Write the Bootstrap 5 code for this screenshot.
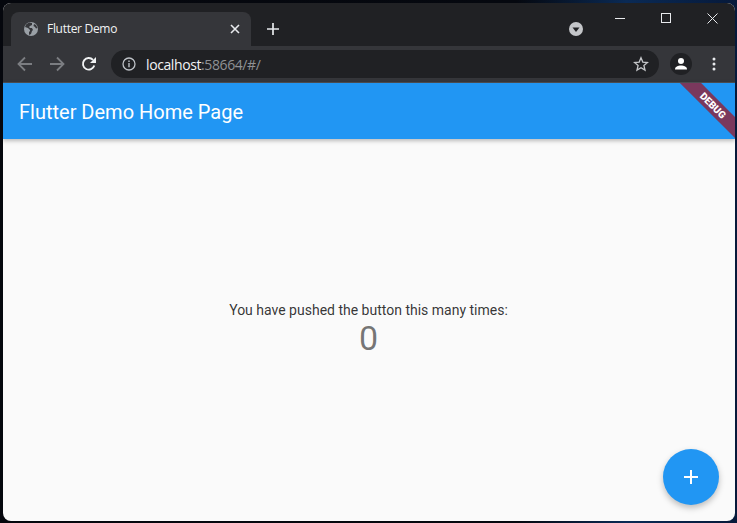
<!DOCTYPE html>
<html lang="en">
<head>
    <meta charset="UTF-8">
    <title>Flutter Demo</title>
    <link href="https://cdn.jsdelivr.net/npm/bootstrap@5.3.0/dist/css/bootstrap.min.css" rel="stylesheet">
    <style>
        html, body { height: 100%; overflow: hidden; }
        body { background: linear-gradient(90deg, #05070d 0%, #05080f 70%, #0a2a55 85%, #06193a 100%); font-family: Roboto, sans-serif; }
        .desk { height: 523px; padding: 3px 2px 2px 3px; }
        .win { height: 518px; border-radius: 8px; overflow: hidden; background: #fafafa; }
        .tabstrip { height: 43px; background: #202124; padding: 9px 0 0 8px; }
        .tabitem { width: 240px; height: 34px; background: #35363a; border-radius: 8px 8px 0 0; padding: 0 11px 0 12px; color: #f1f3f4; font-family: "Open Sans", sans-serif; font-size: 12px; }
        .tabtitle { margin-left: 8px; letter-spacing: -.3px; }
        .newtab { margin-left: 16px; }
        .tabsearch { margin-left: 290px; }
        .winctl { margin-top: -9px; height: 30px; }
        .winbtn { width: 46px; height: 30px; }
        .toolbar { height: 36px; background: #35363a; padding: 0 11px 0 14px; }
        .navbtn { width: 32px; }
        .omni { width: 548px; height: 28px; margin-left: 14px; background: #202124; border-radius: 14px; padding: 0 10px 0 11px; font-family: "Open Sans", sans-serif; font-size: 14px; color: #f1f3f4; }
        .urlhost { margin-left: 10px; letter-spacing: -.4px; }
        .urlrest { color: #8f9194; }
        .avatar { width: 22px; height: 22px; border-radius: 50%; background: #202124; margin-left: 11px; }
        .dots { margin-left: 20px; }
        .appbar { height: 57px; background: #2196f3; border-top: 1px solid #4a4b4f; box-shadow: 0 2px 4px rgba(0,0,0,.25); padding: 2px 0 0 16px; color: #fff; font-size: 20px; font-weight: 400; z-index: 2; overflow: hidden; }
        .ribbon { top: 15px; right: -33px; width: 110px; height: 15px; background: rgba(128,51,84,.95); color: #fff; font-size: 10px; font-weight: 900; line-height: 15px; text-align: center; transform: rotate(45deg); }
        .appmain { padding: 0 1px 3px 0; }
        .pushtext { color: rgba(0,0,0,.8); font-size: 14px; line-height: 20px; }
        .countnum { color: rgba(0,0,0,.54); font-size: 34px; line-height: 37px; }
        .fab { right: 16px; bottom: 16px; width: 56px; height: 56px; border-radius: 50%; background: #2196f3; border: 0; box-shadow: 0 3px 6px rgba(0,0,0,.25); }
    </style>
</head>
<body>
    <div class="desk">
        <div class="win d-flex flex-column position-relative">
            <div class="tabstrip d-flex">
                <div class="tabitem d-flex align-items-center">
                    <svg width="16" height="16" viewBox="0 0 16 16"><circle cx="8" cy="8" r="7" fill="#9aa0a6"/><path d="M2 6l3 1 2 2v1l-1 1v3l2-1 1-3 1-1-1-2H7L6 6l1-1 2-1V2L6 1.500 3 3.500z" fill="#35363a"/><path d="M11 3l2 1 1.500 3-1.500.500-1-1.500-1.500-1z" fill="#35363a"/></svg>
                    <span class="tabtitle flex-grow-1">Flutter Demo</span>
                    <svg width="10" height="10" viewBox="0 0 10 10"><path d="M1 1l8 8M9 1l-8 8" stroke="#e8eaed" stroke-width="1.600"/></svg>
                </div>
                <div class="newtab d-flex align-items-center">
                    <svg width="12" height="12" viewBox="0 0 12 12"><path d="M6 0v12M0 6h12" stroke="#e8eaed" stroke-width="1.700"/></svg>
                </div>
                <div class="tabsearch d-flex align-items-center">
                    <svg width="14" height="14" viewBox="0 0 14 14"><circle cx="7" cy="7" r="7" fill="#c4c6c9"/><path d="M3.500 5.500h7L7 10z" fill="#202124"/></svg>
                </div>
                <div class="winctl d-flex ms-auto">
                    <div class="winbtn d-flex align-items-center justify-content-center">
                        <svg width="10" height="10" viewBox="0 0 10 10"><path d="M0 5.500h10" stroke="#e8eaed"/></svg>
                    </div>
                    <div class="winbtn d-flex align-items-center justify-content-center">
                        <svg width="10" height="10" viewBox="0 0 10 10"><rect x=".5" y=".5" width="9" height="9" fill="none" stroke="#e8eaed"/></svg>
                    </div>
                    <div class="winbtn d-flex align-items-center justify-content-center">
                        <svg width="11" height="11" viewBox="0 0 11 11"><path d="M.5.500l10 10M10.500.500l-10 10" stroke="#e8eaed"/></svg>
                    </div>
                </div>
            </div>
            <div class="toolbar d-flex align-items-center flex-shrink-0">
                <div class="navbtn d-flex">
                    <svg width="16" height="16" viewBox="0 0 16 16"><path d="M15 8H2M8 1.500L1.500 8 8 14.500" fill="none" stroke="#7b7d81" stroke-width="1.800"/></svg>
                </div>
                <div class="navbtn d-flex">
                    <svg width="16" height="16" viewBox="0 0 16 16"><path d="M1 8h13M8 1.500L14.500 8 8 14.500" fill="none" stroke="#7b7d81" stroke-width="1.800"/></svg>
                </div>
                <svg width="16" height="16" viewBox="0 0 16 16"><path d="M13.300 9.500A5.800 5.800 0 1 1 12 3.900" fill="none" stroke="#f1f3f4" stroke-width="1.900"/><path d="M15 1v6H9z" fill="#f1f3f4"/></svg>
                <div class="omni d-flex align-items-center">
                    <svg width="14" height="14" viewBox="0 0 14 14"><circle cx="7" cy="7" r="6" fill="none" stroke="#bdc1c6" stroke-width="1.300"/><path d="M7 6v4.200M7 3.500v1.400" stroke="#bdc1c6" stroke-width="1.400"/></svg>
                    <span class="urlhost flex-grow-1">localhost<span class="urlrest">:58664/#/</span></span>
                    <svg width="16" height="16" viewBox="0 0 16 16"><path d="M8 1.800l1.800 4.300 4.700.400-3.600 3 1.100 4.600L8 11.700l-4 2.400 1.100-4.600-3.600-3 4.700-.400z" fill="none" stroke="#c4c6c9" stroke-width="1.300"/></svg>
                </div>
                <div class="avatar d-flex align-items-center justify-content-center">
                    <svg width="14" height="14" viewBox="0 0 14 14"><circle cx="7" cy="4" r="3" fill="#fff"/><path d="M1 12.500c0-3 3-4 6-4s6 1 6 4z" fill="#fff"/></svg>
                </div>
                <div class="dots d-flex">
                    <svg width="4" height="14" viewBox="0 0 4 14"><circle cx="2" cy="2" r="1.500" fill="#e8eaed"/><circle cx="2" cy="7" r="1.500" fill="#e8eaed"/><circle cx="2" cy="12" r="1.500" fill="#e8eaed"/></svg>
                </div>
            </div>
            <div class="appbar d-flex align-items-center flex-shrink-0 position-relative">
                <span>Flutter Demo Home Page</span>
                <div class="ribbon position-absolute">DEBUG</div>
            </div>
            <div class="appmain flex-grow-1 d-flex flex-column align-items-center justify-content-center">
                <div class="pushtext">You have pushed the button this many times:</div>
                <div class="countnum">0</div>
            </div>
            <button class="fab position-absolute d-flex align-items-center justify-content-center" type="button" aria-label="Increment">
                <svg width="14" height="14" viewBox="0 0 14 14"><path d="M7 0v14M0 7h14" stroke="#fff" stroke-width="2"/></svg>
            </button>
        </div>
    </div>
    <script src="https://cdn.jsdelivr.net/npm/bootstrap@5.3.0/dist/js/bootstrap.bundle.min.js"></script>
</body>
</html>
